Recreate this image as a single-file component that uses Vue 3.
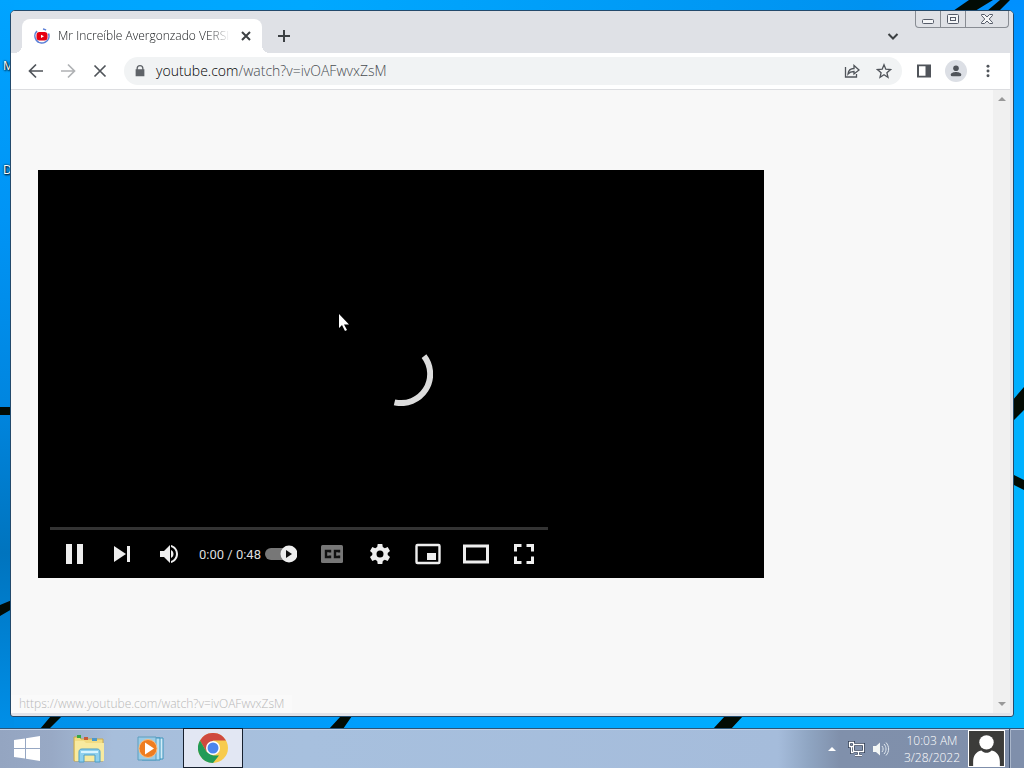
<template>
  <div class="desktop">
    <svg class="wallpaper" viewBox="0 0 1024 768" preserveAspectRatio="none" aria-hidden="true">
      <defs>
        <linearGradient id="sky"><stop offset="0" stop-color="#008fe8"/><stop offset=".4" stop-color="#00a0ff"/><stop offset="1" stop-color="#00b8ff"/></linearGradient>
        <linearGradient id="top"><stop offset="0" stop-color="#00a4ff"/><stop offset=".3" stop-color="#00a8ff"/><stop offset=".85" stop-color="#0092f0"/><stop offset="1" stop-color="#0090ff"/></linearGradient>
        <linearGradient id="left" x2="0" y2="1"><stop offset="0" stop-color="#00a4ff"/><stop offset=".3" stop-color="#0094f5"/><stop offset=".55" stop-color="#0086e0"/><stop offset=".76" stop-color="#0074be"/><stop offset="1" stop-color="#008fe8"/></linearGradient>
        <linearGradient id="right" x2="0" y2="1"><stop offset="0" stop-color="#0090ff"/><stop offset=".4" stop-color="#00acff"/><stop offset="1" stop-color="#00b8ff"/></linearGradient>
      </defs>
      <rect width="1024" height="768" fill="url(#sky)"/>
      <rect width="1024" height="14" fill="url(#top)"/>
      <rect width="14" height="728" fill="url(#left)"/>
      <rect x="1010" width="14" height="728" fill="url(#right)"/>
      <g fill="#020b04">
        <path d="M953 11 969 0h24l-18 11zM987 11 1000 0h10l-11 11z"/>
        <path d="M0 407h12v8H0zM0 605l12-5v9L0 616z"/>
        <path d="M1012 401 1024 387v23l-12 12zM1012 474l12 6v10l-12-6z"/>
        <path d="M40 729 51 716h11L49 729zM329 729l12-13h11l-9 13zM713 729l12-13h18l-12 13z"/>
      </g>
    </svg>
    <span class="shortcut first">Mozilla</span>
    <span class="shortcut second">Discord</span>

    <main class="window">
      <header class="tabs">
        <div class="tab">
          <svg class="favicon" viewBox="0 0 16 16">
            <path d="M3 3a7 7 0 1 0 11.500 2.500M9 1a7 7 0 0 1 3 1.200" fill="none" stroke="#5b7fd6" stroke-width="1.600"/>
            <rect x="2.500" y="4" width="11" height="8.500" rx="3" fill="#e60012"/><path d="m7 6.700 3 1.600-3 1.600z" fill="#fff"/>
          </svg>
          <span class="title">{{ title }}</span>
          <button class="icon close" aria-label="Close tab"><svg viewBox="0 0 16 16"><path d="m4 4 8 8m0-8-8 8" class="line bold"/></svg></button>
        </div>
        <button class="icon plus" aria-label="New tab"><svg viewBox="0 0 16 16"><path d="M8 2v12M2 8h12" class="line bold"/></svg></button>
        <button class="icon search" aria-label="Search tabs"><svg viewBox="0 0 16 16"><path d="m3.500 6 4.500 4.500L12.500 6" class="line bold"/></svg></button>
        <div class="caption">
          <button aria-label="Minimize"><svg viewBox="0 0 14 14"><rect x="1.500" y="7.500" width="11" height="4" rx="1"/></svg></button>
          <button aria-label="Restore"><svg viewBox="0 0 14 14"><rect x="1.500" y="2.500" width="11" height="9" rx="1"/><rect x="4.500" y="5.500" width="5" height="3"/></svg></button>
          <button class="wide" aria-label="Close"><svg viewBox="0 0 14 14"><path d="M1.500 2.500h3L7 5l2.500-2.500h3v1L9.200 7l3.300 3.500v1h-3L7 9l-2.500 2.500h-3v-1L4.800 7 1.500 3.500z"/></svg></button>
        </div>
      </header>

      <nav class="toolbar">
        <button class="icon" aria-label="Back"><svg viewBox="0 0 16 16"><path d="M15 8H2m6-6.500L1.500 8 8 14.500" class="line"/></svg></button>
        <button class="icon faded" aria-label="Forward"><svg viewBox="0 0 16 16"><path d="M1 8h13M8 1.500 14.500 8 8 14.500" class="line"/></svg></button>
        <button class="icon" aria-label="Stop"><svg viewBox="0 0 16 16"><path d="m2.500 2.500 11 11m0-11-11 11" class="line"/></svg></button>
        <div class="address">
          <svg class="lock" viewBox="0 0 16 16"><path d="M4 6V5a4 4 0 0 1 8 0v1h1v8H3V6zm1.500 0h5V5a2.500 2.500 0 0 0-5 0z" fill="#5f6368"/></svg>
          <a class="url" href="#">youtube.com<span>/watch?v=ivOAFwvxZsM</span></a>
          <button class="icon" aria-label="Share"><svg viewBox="0 0 16 16"><path d="M1.500 4v10h11v-3M4 11c.4-4 2.500-5.500 6-5.500V2.500L15 7l-5 4V8.500C7.500 8.500 5.500 9.200 4 11z" class="line thin"/></svg></button>
          <button class="icon" aria-label="Bookmark"><svg viewBox="0 0 16 16"><path d="m8 1.800 1.800 4.400 4.700.4-3.600 3.100 1.100 4.600L8 11.800l-4 2.500 1.100-4.600-3.600-3.100 4.700-.4z" class="line thin"/></svg></button>
        </div>
        <button class="icon panel" aria-label="Side panel"><svg viewBox="0 0 16 16"><path d="M1 1.500h14v13H1zM3 3.300v9.400h6.500V3.300z" fill="#50545a" fill-rule="evenodd"/></svg></button>
        <button class="icon profile" aria-label="Profile"><svg viewBox="0 0 16 16"><circle cx="8" cy="4.800" r="3.200"/><path d="M2 14v-2c0-2 3.500-3 6-3s6 1 6 3v2z"/></svg></button>
        <button class="icon menu" aria-label="Menu"><svg viewBox="0 0 16 16"><circle cx="8" cy="2.500" r="1.700"/><circle cx="8" cy="8" r="1.700"/><circle cx="8" cy="13.500" r="1.700"/></svg></button>
      </nav>

      <section class="page">
        <div class="content">
          <div class="player">
            <svg class="spinner" viewBox="0 0 64 64"><path d="M55 14.200A29 29 0 0 1 25.500 60.300" fill="none" stroke="#ddd" stroke-width="6"/></svg>
            <svg class="cursor" viewBox="0 0 12 18"><path d="M1 0v14l3-3 3 6 2-1-3-5.500h5z" fill="#fff"/></svg>
            <div class="chrome-bottom">
              <div class="progress"></div>
              <div class="controls">
                <button aria-label="Pause"><svg viewBox="0 0 36 36"><path d="M10 8h6v20h-6zM21 8h6v20h-6z"/></svg></button>
                <button aria-label="Next"><svg viewBox="0 0 36 36"><path d="M10 10v16l12-8zM23 10h3v16h-3z"/></svg></button>
                <button aria-label="Mute"><svg viewBox="0 0 36 36"><path d="M8 15v6h4l6 6V9l-6 6zM19 14v8c1.500-.7 2.500-2.200 2.500-4S20.500 14.700 19 14zM19 9v2.100c3 .9 5 3.600 5 6.900s-2 6-5 6.900V27c4-.9 7-4.600 7-9s-3-8.100-7-9z"/></svg></button>
                <span class="time">0:00 / 0:48</span>
                <button class="autoplay" aria-label="Autoplay"><svg viewBox="0 0 32 18"><rect y="3" width="28" height="12" rx="6" fill="#777"/><circle cx="24" cy="9" r="8.500"/><path d="m21 5 6 4-6 4z" fill="#111"/></svg></button>
                <button class="dim" aria-label="Subtitles"><svg viewBox="0 0 36 36"><rect x="7" y="9" width="22" height="18" rx="1.500"/><path d="M16 16.500V15h-4v6h4v-1.500M25 16.500V15h-4v6h4v-1.500" fill="none" stroke="#111" stroke-width="2.400"/></svg></button>
                <button aria-label="Settings"><svg viewBox="0 0 36 36"><path fill-rule="evenodd" d="m15.700 8-.5 3-2 1.200-2.900-1.100L8 15l2.300 2v2L8 21l2.300 3.900 2.900-1.100 2 1.200.5 3h4.600l.5-3 2-1.200 2.900 1.100L28 21l-2.300-2v-2l2.300-2-2.300-3.900-2.900 1.100-2-1.200-.5-3zM18 14.500a3.500 3.500 0 1 1 0 7 3.500 3.500 0 0 1 0-7z"/></svg></button>
                <button aria-label="Miniplayer"><svg viewBox="0 0 36 36"><rect x="6.500" y="9" width="23" height="18" rx="1" fill="none" stroke="#eee" stroke-width="2.400"/><path d="M17 17h9v7h-9z"/></svg></button>
                <button aria-label="Theater mode"><svg viewBox="0 0 36 36"><rect x="6.500" y="10" width="23" height="16" fill="none" stroke="#eee" stroke-width="3"/></svg></button>
                <button aria-label="Full screen"><svg viewBox="0 0 36 36"><path d="M9.500 15.500v-6h6M20.500 9.500h6v6M26.500 20.500v6h-6M15.500 26.500h-6v-6" fill="none" stroke="#eee" stroke-width="3"/></svg></button>
              </div>
            </div>
          </div>
        </div>
        <div class="scrollbar"><i class="up"></i><i class="down"></i></div>
        <div class="status">https://www.youtube.com/watch?v=ivOAFwvxZsM</div>
      </section>
    </main>

    <footer class="taskbar">
      <button class="task start" aria-label="Start"><svg viewBox="0 0 28 26"><path fill="#fff" d="m1 4 11-1.600V12H1zM13 2.200 27 0v12H13zM1 13h11v9.600L1 21zM13 13h14v12l-14-2.200z"/></svg></button>
      <button class="task folder" aria-label="File Explorer">
        <svg viewBox="0 0 34 30">
          <path d="M2 3h5l2 2h22v22H2z" fill="#f2dc83" stroke="#c9a94d"/><path d="M5 1h4v3H5z" fill="#36a845"/><path d="M12 3h4v3h-4z" fill="#c75a38"/><path d="M20 4h5v3h-5z" fill="#4d98c8"/>
          <path d="M3 7h9l2 2h18v18H3z" fill="#f8ea9f"/><path d="M7 28V18c0-2 1-3 3-3h15c2 0 3 1 3 3v10h-5v-7H12v7z" fill="#8fd0ee" stroke="#4c9fc7"/><path d="M9 18h17" stroke="#d8f4ff" stroke-width="2"/>
        </svg>
      </button>
      <button class="task media" aria-label="Media Player">
        <svg viewBox="0 0 28 26">
          <path d="M8 2h18v21H8z" fill="#d3ecf8" stroke="#3d95bd"/><path d="M5 2h18v22H5z" fill="#b5dff3" stroke="#3d95bd"/><path d="M1 1h18v23H1z" fill="#9acbe5" stroke="#5d9ebf"/>
          <circle cx="11" cy="12.500" r="9" fill="#ee7d20" stroke="#f9bc7e"/><path d="m8 6.500 9 6-9 6z" fill="#fff"/>
        </svg>
      </button>
      <button class="task active" aria-label="Google Chrome">
        <svg viewBox="0 0 30 30">
          <circle cx="15" cy="15" r="15" fill="#f7cb4d"/><path d="M2 7.500A15 15 0 0 1 28 7.500H15L8.500 18.800z" fill="#cf4a3f"/><path d="M2 7.500 8.500 18.800 15 22.500h6L15 30A15 15 0 0 1 2 7.500z" fill="#219b58"/>
          <circle cx="15" cy="15" r="7" fill="#fff"/><circle cx="15" cy="15" r="5.500" fill="#4c85ee"/>
        </svg>
      </button>
      <div class="tray">
        <i class="more"></i>
        <svg class="network" viewBox="0 0 18 16"><path d="M5.500 3.500h10v7h-10zM10.500 11v3M7 14.500h7M1.500 1.500h4v4h-4zM3.500 6v5.500h2" fill="none" stroke="#334158" stroke-width="3"/><path d="M5.500 3.500h10v7h-10zM10.500 11v3M7 14.500h7M1.500 1.500h4v4h-4zM3.500 6v5.500h2" fill="none" stroke="#fff" stroke-width="1.300"/></svg>
        <svg class="speaker" viewBox="0 0 18 16"><path d="M1 5h3l4-3.500v13L4 11H1z" fill="#f3f6f5"/><path d="M10 5c1.500 2 1.500 4 0 6M12 3c2.700 3 2.700 7 0 10M14 1.500c3.500 4 3.500 9 0 13" fill="none" stroke="#e1e8ef"/></svg>
        <time class="clock"><span>10:03 AM</span><span>3/28/2022</span></time>
        <svg class="avatar" viewBox="0 0 36 36"><path d="M0 0h36v36H0z" fill="#3c3c3a"/><circle cx="18" cy="12" r="7" fill="#fff"/><path d="M5 36v-5c0-6 3-10 8-11 3 3 7 3 10 0 5 1 8 5 8 11v5z" fill="#fff"/><path d="M.5.5h35v35H.5z" fill="none" stroke="#fff"/></svg>
        <button class="peek" aria-label="Show desktop"></button>
      </div>
    </footer>
  </div>
</template>

<script setup>
const title = 'Mr Increíble Avergonzado VERSIÓN'
</script>

<style>
body { margin: 0; }
</style>

<style scoped>
* { box-sizing: border-box; }
button { border: none; background: none; padding: 0; margin: 0; display: flex; align-items: center; justify-content: center; flex: none; }
svg { display: block; flex: none; }
.desktop {
  position: relative; min-height: 100vh; display: flex; flex-direction: column;
  overflow: hidden; font-family: "Open Sans", "Noto Sans", sans-serif;
}
.wallpaper { position: absolute; width: 100%; height: 100%; }
.shortcut { position: absolute; left: 3px; color: #fff; font-size: 12px; line-height: 16px; text-shadow: 1px 1px 2px #000, 0 0 2px #000; }
.first { top: 58px; }
.second { top: 162px; }

.window {
  position: relative; flex: 1; display: flex; flex-direction: column; margin: 10px 10px 11px 10px;
  background: #e2e3e9; border: 1px solid #234a6c; border-radius: 5px 5px 3px 3px; overflow: hidden; padding: 0 3px 3px 0;
}
.tabs { display: flex; height: 42px; padding: 8px 0 0 11px; background: #dfe1e6; margin-right: -3px; }
.tab { position: relative; width: 240px; height: 34px; background: #fff; border-radius: 8px 8px 0 0; display: flex; align-items: center; padding: 0 8px 0 12px; gap: 8px; }
.tab::before, .tab::after { content: ""; position: absolute; bottom: 0; width: 8px; height: 8px; }
.tab::before { left: -8px; background: radial-gradient(circle at 0 0, transparent 8px, #fff 8px); }
.tab::after { right: -8px; background: radial-gradient(circle at 100% 0, transparent 8px, #fff 8px); }
.favicon { width: 16px; height: 16px; }
.title {
  flex: 1; min-width: 0; overflow: hidden; white-space: nowrap; font-size: 12px; font-weight: 300; line-height: 18px; color: #15181b;
  -webkit-mask-image: linear-gradient(90deg, #000 88%, transparent); mask-image: linear-gradient(90deg, #000 88%, transparent);
}
.icon svg { width: 16px; height: 16px; fill: #50545a; }
.icon .line { fill: none; stroke: #50545a; stroke-width: 1.7; }
.icon .bold { stroke: #3c4043; stroke-width: 2; }
.icon .thin { stroke-width: 1.3; }
.plus { width: 28px; margin: 0 0 0 8px; height: 34px; }
.search { width: 28px; height: 34px; margin-left: auto; }
.caption { display: flex; height: 17px; margin: -8px 4px 0 8px; border: 1px solid #888c93; border-top: none; border-radius: 0 0 4px 4px; }
.caption button { width: 25px; border-right: 1px solid #888c93; }
.caption .wide { width: 42px; border: none; }
.caption svg { width: 14px; height: 14px; fill: #f5f6f8; stroke: #555b68; stroke-width: 1; }

.toolbar { display: flex; align-items: center; height: 37px; padding: 0 6px 0 9px; background: #fff; border-bottom: 1px solid #dcdde0; }
.toolbar > .icon { width: 32px; height: 32px; }
.faded { opacity: .45; }
.address { flex: 1; display: flex; align-items: center; height: 28px; margin: 0 6px 0 8px; padding: 0 2px 0 8px; border-radius: 14px; background: #f1f3f4; }
.address .icon { width: 32px; height: 28px; }
.lock { width: 14px; height: 14px; margin: 0 9px 0 1px; }
.url { flex: 1; font-size: 14px; font-weight: 300; line-height: 20px; color: #000; text-decoration: none; white-space: nowrap; }
.url span { color: #484c50; }
.profile svg { width: 22px; height: 22px; padding: 4px; border-radius: 50%; background: #dcdfe5; }
.menu svg { width: 14px; height: 14px; }

.page { position: relative; flex: 1; display: flex; background: #f8f8f8; }
.content { flex: 1; padding: 80px 0 80px 27px; }
.player { position: relative; width: 76%; aspect-ratio: 16 / 9; background: #000; display: flex; flex-direction: column; justify-content: flex-end; }
.spinner { position: absolute; width: 64px; height: 64px; left: 50%; top: 50%; transform: translate(-50%, -50%); }
.cursor { position: absolute; left: 300px; top: 144px; width: 12px; height: 18px; }
.chrome-bottom { max-width: 522px; padding: 0 12px; }
.progress { height: 3px; background: #333; }
.controls { display: flex; align-items: center; height: 48px; }
.controls button { width: 48px; height: 48px; }
.controls svg { width: 36px; height: 36px; fill: #eee; }
.controls .autoplay { width: 46px; padding-left: 3px; justify-content: flex-start; }
.controls .autoplay svg { width: 32px; height: 18px; }
.controls .dim svg { fill: #777; }
.time { flex: 1; padding-left: 5px; font-family: Roboto, sans-serif; font-size: 13px; color: #ddd; white-space: nowrap; }
.scrollbar { width: 17px; background: #f0f0f0; display: flex; flex-direction: column; justify-content: space-between; align-items: center; padding: 7px 0; }
.scrollbar i { border: 4px solid transparent; }
.scrollbar .up { border-top: none; border-bottom-color: #999; }
.scrollbar .down { border-bottom: none; border-top-color: #999; }
.status { position: absolute; left: 0; bottom: 0; padding: 0 8px; font-size: 12px; font-weight: 300; line-height: 18px; color: #b8b8b8; background: #fafafa; }

.taskbar {
  position: relative; display: flex; height: 40px; border-top: 1px solid #2c5578;
  background: linear-gradient(90deg, #94a5c1 0, #98a9c5 5%, #a7bedb 11%, #a7c0de 30%, #a5bcdb 76%, #8fa5c2 79%, #8090ab 82%, #7f8fab 100%);
  box-shadow: inset 0 1px 0 #c3d1e6;
}
.task { width: 60px; }
.start { width: 54px; }
.start svg { width: 28px; height: 26px; }
.folder { width: 70px; }
.folder svg { width: 34px; height: 30px; }
.media { width: 53px; margin-right: 6px; }
.media svg { width: 28px; height: 26px; }
.active { background: #e2e7f3; border: 1px solid #16202e; margin-top: -1px; }
.active svg { width: 30px; height: 30px; }
.tray { margin-left: auto; display: flex; align-items: center; }
.more { border: 4px solid transparent; border-top: none; border-bottom-color: #fff; margin-right: 12px; }
.network { width: 18px; height: 16px; margin-right: 6px; }
.speaker { width: 18px; height: 16px; margin-right: 10px; }
.clock { width: 64px; display: flex; flex-direction: column; text-align: center; font-size: 12px; font-weight: 300; line-height: 17px; color: #fff; margin-right: 4px; }
.avatar { width: 37px; height: 37px; margin-right: 4px; }
.peek { width: 15px; height: 39px; border-left: 1px solid #3e506d; box-shadow: inset 1px 0 0 #a9b6ca; }
</style>
